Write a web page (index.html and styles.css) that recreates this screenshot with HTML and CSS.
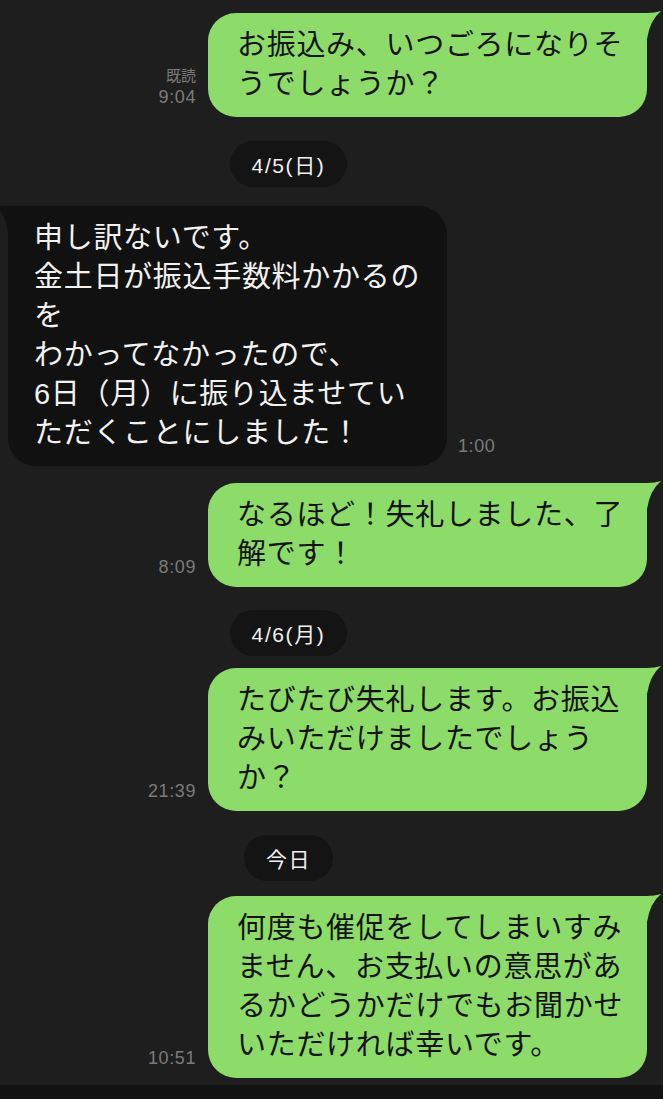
FILE: index.html
```html
<!DOCTYPE html>
<html lang="ja">
<head>
<meta charset="utf-8">
<title>chat</title>
<link rel="stylesheet" href="styles.css">
</head>
<body>
<div class="screen">
  <div class="chat">
    <div class="row out first">
      <div class="meta"><span class="read">既読</span><span class="time">9:04</span></div>
      <div class="bubble green">
        <svg class="tail tail-r" width="44" height="30" viewBox="-28 -3 44 30"><path d="M-28 0 L0 0 Q8 0 14 -2 Q3 7 0 26 L-28 26 Z"/></svg>
        お振込み、いつごろになりそ<br>うでしょうか？
      </div>
    </div>

    <div class="date d1"><span class="pill">4/5(日)</span></div>

    <div class="row in">
      <div class="bubble dark">
        <svg class="tail tail-l" width="44" height="30" viewBox="-16 -3 44 30"><path d="M28 0 L0 0 Q-8 0 -14 -2 Q-3 7 0 26 L28 26 Z"/></svg>
        申し訳ないです。<br>金土日が振込手数料かかるの<br>を<br>わかってなかったので、<br>6日（月）に振り込ませてい<br>ただくことにしました！
      </div>
      <div class="meta"><span class="time">1:00</span></div>
    </div>

    <div class="row out">
      <div class="meta"><span class="time">8:09</span></div>
      <div class="bubble green">
        <svg class="tail tail-r" width="44" height="30" viewBox="-28 -3 44 30"><path d="M-28 0 L0 0 Q8 0 14 -2 Q3 7 0 26 L-28 26 Z"/></svg>
        なるほど！失礼しました、了<br>解です！
      </div>
    </div>

    <div class="date d2"><span class="pill">4/6(月)</span></div>

    <div class="row out">
      <div class="meta"><span class="time">21:39</span></div>
      <div class="bubble green">
        <svg class="tail tail-r" width="44" height="30" viewBox="-28 -3 44 30"><path d="M-28 0 L0 0 Q8 0 14 -2 Q3 7 0 26 L-28 26 Z"/></svg>
        たびたび失礼します。お振込<br>みいただけましたでしょう<br>か？
      </div>
    </div>

    <div class="date d3"><span class="pill">今日</span></div>

    <div class="row out">
      <div class="meta"><span class="time">10:51</span></div>
      <div class="bubble green">
        <svg class="tail tail-r" width="44" height="30" viewBox="-28 -3 44 30"><path d="M-28 0 L0 0 Q8 0 14 -2 Q3 7 0 26 L-28 26 Z"/></svg>
        何度も催促をしてしまいすみ<br>ません、お支払いの意思があ<br>るかどうかだけでもお聞かせ<br>いただければ幸いです。
      </div>
    </div>
  </div>
  <div class="footer"></div>
</div>
</body>
</html>
```

FILE: styles.css
```css
* { box-sizing: border-box; }

html, body {
  margin: 0;
  padding: 0;
  background: #1e1e1e;
}

body {
  font-family: "Liberation Sans", "Noto Sans CJK JP", sans-serif;
  overflow: hidden;
}

.screen {
  height: 100vh;
  display: flex;
  flex-direction: column;
}

.chat {
  flex: 1;
  display: flex;
  flex-direction: column;
  padding-top: 13px;
}

.row {
  display: flex;
  align-items: flex-end;
}

.row + .row {
  margin-top: 17px;
}

.row.out {
  justify-content: flex-end;
  padding-right: 16px;
  gap: 12px;
}

.row.in {
  justify-content: flex-start;
  padding-left: 8px;
  gap: 11px;
}

.bubble {
  position: relative;
  width: 439px;
  padding: 13px 10px 13px 29px;
  border-radius: 28px;
  font-size: 29px;
  line-height: 39px;
  letter-spacing: 0.7px;
  white-space: nowrap;
}

.bubble.green {
  background: #8ddc69;
  color: #141414;
}

.bubble.green .tail path { fill: #8ddc69; }

.bubble.dark {
  background: #111111;
  color: #f2f2f2;
  padding-left: 26px;
}

.bubble.dark .tail path { fill: #111111; }

.tail {
  position: absolute;
  top: -3px;
}

.tail-r { right: -16px; }
.tail-l { left: -16px; }

.meta {
  display: flex;
  flex-direction: column;
  align-items: flex-end;
  padding-bottom: 9px;
  color: #7b7b7b;
}

.row.in .meta { align-items: flex-start; }

.read {
  font-size: 15px;
  line-height: 20px;
}

.time {
  font-size: 18px;
  line-height: 22px;
  letter-spacing: 0.6px;
}

.date {
  display: flex;
  justify-content: center;
  padding-right: 86px;
}

.d1 { margin: 24px 0 19px; }
.d2 { margin: 23px 0 12px; }
.d3 { margin: 24px 0 15px; }

.pill {
  height: 46px;
  display: inline-flex;
  align-items: center;
  padding: 0 22px;
  border-radius: 23px;
  background: #141414;
  color: #f0f0f0;
  font-size: 21px;
  letter-spacing: 1.6px;
}

.footer {
  height: 14px;
  background: #121212;
}
```
